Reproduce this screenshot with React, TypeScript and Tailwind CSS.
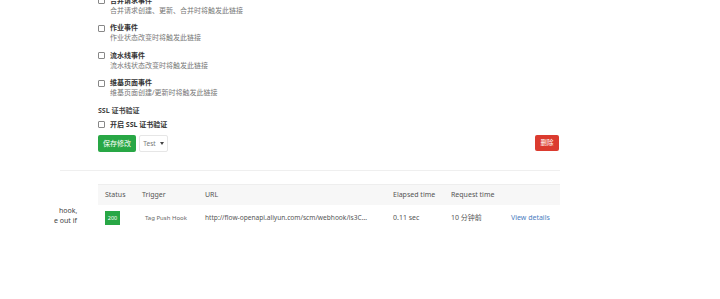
const events = [
  { title: "合并请求事件", desc: "合并请求创建、更新、合并时将触发此链接" },
  { title: "作业事件", desc: "作业状态改变时将触发此链接" },
  { title: "流水线事件", desc: "流水线状态改变时将触发此链接" },
  { title: "维基页面事件", desc: "维基页面创建/更新时将触发此链接" },
];

const font = "font-['Noto_Sans','Noto_Sans_CJK_SC',sans-serif]";

function Box() {
  return <span className="w-[7px] h-[7px] border border-[#888] rounded-[1px] bg-white shrink-0" />;
}

export default function App() {
  return (
    <div className={`w-[720px] h-[299px] overflow-hidden bg-white text-[#333] ${font}`}>
      {/* settings form */}
      <div className="ml-[98px] w-[462px] -mt-[4.5px]">
        {events.map((e) => (
          <div key={e.title} className="mb-[7.5px]">
            <div className="flex items-center gap-[5px] h-[10px]">
              <Box />
              <span className="text-[7px] leading-[10px] font-bold">{e.title}</span>
            </div>
            <div className="pl-[12px] text-[7px] leading-[10px] text-[#777]">{e.desc}</div>
          </div>
        ))}

        <div className="mt-[1px] text-[7px] leading-[10px] font-bold text-[#444]">SSL 证书验证</div>
        <div className="mt-[4px] flex items-center gap-[5px] h-[10px]">
          <Box />
          <span className="text-[7px] leading-[10px] font-bold">开启 SSL 证书验证</span>
        </div>

        <div className="mt-[5.5px] flex items-start justify-between">
          <div className="flex gap-[3px]">
            <button className="h-[17px] w-[38px] rounded-[2px] bg-[#28a745] text-white text-[7px] leading-[17px]">
              保存修改
            </button>
            <button className="h-[17px] w-[29px] rounded-[2px] border border-[#e6e6e6] bg-white text-[#777] text-[6.5px] flex items-center justify-center gap-[4px]">
              Test
              <span className="w-0 h-0 border-l-[2.5px] border-r-[2.5px] border-t-[3px] border-l-transparent border-r-transparent border-t-[#444]" />
            </button>
          </div>
          <button className="mr-[1px] h-[16px] w-[24px] rounded-[2px] bg-[#db3b2f] text-white text-[6.5px] leading-[16px]">
            删除
          </button>
        </div>
      </div>

      <div className="ml-[60px] w-[500px] mt-[18px] border-t border-[#efefef]" />

      {/* recent deliveries */}
      <div className="flex mt-[13px]">
        <div className="w-[98px] pt-[22px] pl-[56px] text-[7px] leading-[10px] text-[#444] overflow-hidden">
          <div className="pl-[3px]">hook,</div>
          <div className="-ml-[2px]">e out if</div>
        </div>
        <div className="w-[462px] text-[7px]">
          <div className="flex h-[21px] items-center bg-[#f7f7f7] border-t border-[#eee] text-[#555]">
            <div className="w-[37px] pl-[7px]">Status</div>
            <div className="w-[63px] pl-[7px]">Trigger</div>
            <div className="w-[188px] pl-[7px]">URL</div>
            <div className="w-[58px] pl-[7px]">Elapsed time</div>
            <div className="w-[60px] pl-[7px]">Request time</div>
            <div className="flex-1" />
          </div>
          <div className="flex h-[26px] items-center text-[#555]">
            <div className="w-[37px] pl-[7px]">
              <span className="flex h-[14px] w-[15px] items-center justify-center bg-[#28a745] text-white text-[5.5px]">200</span>
            </div>
            <div className="w-[63px] pl-[10px] text-[6px] text-[#666]">Tag Push Hook</div>
            <div className="w-[188px] pl-[7px] text-[6.6px] whitespace-nowrap overflow-hidden">
              http://flow-openapi.aliyun.com/scm/webhook/is3C...
            </div>
            <div className="w-[58px] pl-[7px]">0.11 sec</div>
            <div className="w-[60px] pl-[7px]">10 分钟前</div>
            <div className="flex-1 pl-[7px] text-[#4a7cc0]">View details</div>
          </div>
        </div>
      </div>
    </div>
  );
}
